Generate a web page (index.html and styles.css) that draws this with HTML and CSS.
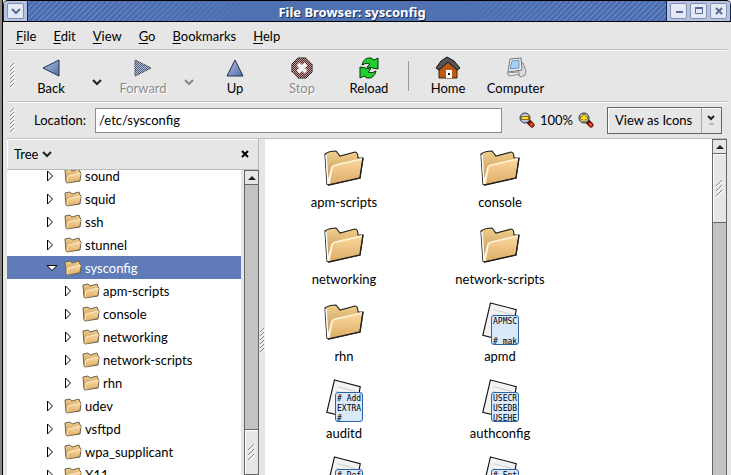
FILE: index.html
```
<!DOCTYPE html>
<html lang="en">
<head>
  <meta charset="UTF-8">
  <title>File Browser: sysconfig</title>
  <link rel="stylesheet" href="styles.css">
</head>
<body>
  <svg class="defs" width="0" height="0">
    <defs>
      <linearGradient id="tan" x1="0" y1="0" x2="0" y2="1">
        <stop offset="0" stop-color="#fdd9a0"/><stop offset="1" stop-color="#dcae68"/>
      </linearGradient>
      <linearGradient id="tan-back" x1="0" y1="0" x2="0" y2="1">
        <stop offset="0" stop-color="#f2cf8d"/><stop offset="1" stop-color="#b98a4c"/>
      </linearGradient>
      <linearGradient id="blue" x1="0" y1="0" x2="1" y2="1">
        <stop offset="0" stop-color="#b4c3e0"/><stop offset="1" stop-color="#4f6ea8"/>
      </linearGradient>
      <pattern id="dots" width="2" height="2" patternUnits="userSpaceOnUse">
        <path d="M0 0H1V1H0ZM1 1H2V2H1Z" fill="#e6e6e6" fill-opacity=".65"/>
      </pattern>
      <symbol id="folder" viewBox="0 0 40 36">
        <path d="M1 4Q5 1 12 1L16 6L31 2Q34 2 34 8L39 8L36 28L5 35L3 34Z" fill="url(#tan-back)" stroke="#222" stroke-width="1.2"/>
        <path d="M2 5L4 34L8 17" fill="none" stroke="#fff" stroke-width="1.5"/>
        <path d="M8 18Q9 15 12 14L38 8L35 27L5 34Z" fill="url(#tan)"/>
        <path d="M5 34L8 18Q9 15 12 15L38 9" fill="none" stroke="#fff3da" stroke-width="1.5"/>
        <path d="M39 8L36 28L4 35" fill="none" stroke="#222" stroke-width="1.2"/>
      </symbol>
      <symbol id="folder-small" viewBox="0 0 18 16">
        <path d="M1 2L6 1L8 3L15 1L16 4L17 5L16 13L3 15L2 14Z" fill="url(#tan-back)" stroke="#6c6250"/>
        <path d="M4 8L17 5L15 12L3 15Z" fill="url(#tan)"/>
        <path d="M3 14L4 8L16 5" fill="none" stroke="#fdebcb"/>
      </symbol>
      <symbol id="closed" viewBox="0 0 12 12">
        <path d="M1.500 1V11L6.500 6Z" fill="#fff" stroke="#000"/>
      </symbol>
      <symbol id="opened" viewBox="0 0 12 12">
        <path d="M1 3.500H11L6 8.500Z" fill="#fff" stroke="#000"/>
      </symbol>
      <symbol id="paper" viewBox="0 0 38 44">
        <path d="M9 1L36 8L30 42L1 35Z" fill="#f3f3f3" stroke="#111" stroke-width="1.2"/>
        <path d="M12 8L31 13M11 13L28 17M10 18L20 20" stroke="#ccc"/>
      </symbol>
      <symbol id="grip" viewBox="0 0 5 25">
        <path d="M1 5L5 1M1 9L5 5M1 13L5 9M1 17L5 13M1 21L5 17M1 25L5 21" stroke="#fff"/>
        <path d="M0 4L4 0M0 8L4 4M0 12L4 8M0 16L4 12M0 20L4 16M0 24L4 20" stroke="#888"/>
      </symbol>
      <symbol id="thumb-grip" viewBox="0 0 7 17">
        <path d="M1 7L7 1M1 12L7 6M1 17L7 11" stroke="#fff"/>
        <path d="M0 6L6 0M0 11L6 5M0 16L6 10" stroke="#888"/>
      </symbol>
      <symbol id="lens" viewBox="0 0 16 16">
        <path d="M10 10L13 13" stroke="#5b1608" stroke-width="5" stroke-linecap="round"/>
        <path d="M12 12L13 13" stroke="#ee4a1c" stroke-width="3" stroke-linecap="round"/>
        <circle cx="6" cy="6" r="5" fill="#b8c8dc" stroke="#333"/>
      </symbol>
    </defs>
  </svg>

  <div class="window">
    <header class="titlebar">
      <div class="title-buttons">
        <button class="win-btn" aria-label="Window menu"><svg width="10" height="8"><path d="M1 2L5 6L9 2" fill="none" stroke="#5a6a96" stroke-width="2"/></svg></button>
      </div>
      <h1>File Browser: sysconfig</h1>
      <div class="title-buttons">
        <button class="win-btn" aria-label="Minimize"><svg width="8" height="8"><path d="M1 5H8" stroke="#5a6a96" stroke-width="2"/></svg></button>
        <button class="win-btn" aria-label="Maximize"><svg width="8" height="8"><path d="M.5 1V6.500H7.500V1" fill="none" stroke="#5a6a96"/><path d="M0 1H8" stroke="#5a6a96" stroke-width="2"/></svg></button>
        <button class="win-btn" aria-label="Close"><svg width="8" height="8"><path d="M1 1L7 7M7 1L1 7" stroke="#5a6a96" stroke-width="2"/></svg></button>
      </div>
    </header>

    <nav class="menubar">
      <button><u>F</u>ile</button>
      <button><u>E</u>dit</button>
      <button><u>V</u>iew</button>
      <button><u>G</u>o</button>
      <button><u>B</u>ookmarks</button>
      <button><u>H</u>elp</button>
    </nav>

    <div class="toolbar">
      <svg class="grip"><use href="#grip"/></svg>
      <button class="tool"><svg width="24" height="24"><path d="M4 12L20 4V20Z" fill="url(#blue)" stroke="#222f55"/></svg>Back</button>
      <button class="drop" aria-label="Back history"><svg width="10" height="7"><path d="M1 1L5 5L9 1" fill="none" stroke="#222" stroke-width="2"/></svg></button>
      <button class="tool" disabled><svg width="24" height="24"><path d="M4 4L20 12L4 20Z" fill="#4c6291" stroke="#333"/><path d="M3 3L21 12L3 21Z" fill="url(#dots)"/></svg>Forward</button>
      <button class="drop" disabled aria-label="Forward history"><svg width="10" height="7"><path d="M1 1L5 5L9 1" fill="none" stroke="#888" stroke-width="2"/></svg></button>
      <button class="tool"><svg width="24" height="24"><path d="M12 4L20 20H4Z" fill="url(#blue)" stroke="#222f55"/></svg>Up</button>
      <button class="tool stop" disabled><svg width="24" height="24"><path d="M8 2H16L22 8V16L16 22H8L2 16V8Z" fill="#5c2224" stroke="#111"/><path d="M8 8L16 16M16 8L8 16" stroke="#fff" stroke-width="4"/><path d="M2 2H22V22H2Z" fill="url(#dots)"/></svg>Stop</button>
      <button class="tool"><svg width="24" height="24"><path id="arrow" d="M5 9Q7 1 14 2L17 4L21 2L21 13L10 11L13 8Q9 6 5 9Z" fill="#1fd02e" stroke="#042f06"/><use href="#arrow" transform="rotate(180 12 12)"/></svg>Reload</button>
      <span class="divider"></span>
      <button class="tool"><svg width="26" height="24"><path d="M4 11L13 4L22 11V22H4Z" fill="#bd5a17" stroke="#4a1f04"/><path d="M1 12L6 5L12 1L19 5L25 12L22 14L13 6L4 14Z" fill="#555" stroke="#111"/><rect x="11" y="14" width="6" height="8" fill="#fff"/><rect x="13" y="17" width="2" height="2" fill="#111"/></svg>Home</button>
      <button class="tool computer"><svg width="24" height="24"><path d="M16 6L19 7L22 15L21 19L17 21L14 19Z" fill="#ddd" stroke="#888"/><path d="M6 3L17 2L18 14L4 16Z" fill="#eee" stroke="#777"/><path d="M8 5L15 4L15 12L6 13Z" fill="#a8d0f4" stroke="#6a94c0"/><path d="M3 17L14 16L16 18L5 20Z" fill="#eee" stroke="#888"/></svg>Computer</button>
    </div>

    <div class="locationbar">
      <svg class="grip"><use href="#grip"/></svg>
      <label for="location">Location:</label>
      <input id="location" type="text" value="/etc/sysconfig">
      <div class="zoom">
        <button aria-label="Zoom out"><svg width="16" height="16"><use href="#lens"/><path d="M2 6H10" stroke="#9a6b00" stroke-width="4"/><path d="M3 6H9" stroke="#ffd83a" stroke-width="2"/></svg></button>
        <span>100%</span>
        <button aria-label="Zoom in"><svg width="16" height="16"><use href="#lens"/><path d="M2 6H10M6 2V10" stroke="#9a6b00" stroke-width="3"/><path d="M3 6H9M6 3V9" stroke="#ffe000" stroke-width="2"/></svg></button>
      </div>
      <div class="view-select">
        <select aria-label="View"><option>View as Icons</option><option>View as List</option></select>
        <svg width="8" height="10"><path d="M1 1L4 4L7 1" fill="none" stroke="#222" stroke-width="2"/><path d="M2 9H7" stroke="#bbb" stroke-width="2"/></svg>
      </div>
    </div>

    <main class="panes">
      <aside class="sidebar">
        <div class="side-head">
          <button>Tree<svg width="10" height="7"><path d="M1 1L5 5L9 1" fill="none" stroke="#222" stroke-width="2"/></svg></button>
          <button aria-label="Close side pane"><svg width="8" height="8"><path d="M1 1L7 7M7 1L1 7" stroke="#000" stroke-width="2"/></svg></button>
        </div>
        <div class="side-body">
          <ul class="tree" id="tree"></ul>
          <div class="scroll">
            <button aria-label="Scroll up"><svg width="8" height="6"><path d="M0 5L4 1L8 5Z" fill="#222"/></svg></button>
            <span class="track"></span>
            <span class="thumb tree-thumb"><svg><use href="#thumb-grip"/></svg></span>
          </div>
        </div>
      </aside>
      <div class="splitter"><svg class="grip"><use href="#grip"/></svg></div>
      <section class="files" id="files"></section>
      <div class="scroll">
        <button aria-label="Scroll up"><svg width="8" height="6"><path d="M0 5L4 1L8 5Z" fill="#222"/></svg></button>
        <span class="thumb files-thumb"><svg><use href="#thumb-grip"/></svg></span>
        <span class="track"></span>
      </div>
    </main>
  </div>

  <script src="script.js"></script>
</body>
</html>
```
FILE: styles.css
```
* {
  box-sizing: border-box;
}
body {
  margin: 0;
  background: #8b897d;
  color: #000;
  font: 13px/16px Lato, sans-serif;
}
button {
  font: inherit;
  color: inherit;
  background: none;
  border: 0;
  padding: 0;
}
svg {
  display: block;
}
.defs {
  position: absolute;
}
.window {
  display: flex;
  flex-direction: column;
  height: 100vh;
  margin-left: 2px;
  padding-left: 4px;
  background: #e6e6e6;
  border-left: 1px solid #000;
  overflow: hidden;
}
.titlebar {
  flex: none;
  display: flex;
  height: 22px;
  margin-left: -4px;
  border-top: 1px solid #000;
  border-bottom: 1px solid #000;
  border-radius: 5px 5px 0 0;
  background: repeating-linear-gradient(135deg, #4a6bb0 0 2px, #6f8fcb 3px, #4a6bb0 4px);
  overflow: hidden;
}
.titlebar h1 {
  flex: 1;
  margin: 0;
  padding-left: 10px;
  background: linear-gradient(90deg, transparent 10%, #4f70b1 40%, #4f70b1 65%, transparent 85%);
  color: #fff;
  font: bold 13px/22px "Noto Sans", sans-serif;
  text-align: center;
  text-shadow: 1px 1px #1c2f5a;
}
.title-buttons {
  display: flex;
  align-items: center;
  gap: 3px;
  padding: 0 3px;
  background: #b4c1df;
  border: 0 solid #18264c;
  border-width: 0 1px;
}
.win-btn {
  display: grid;
  place-items: center;
  width: 17px;
  height: 16px;
  background: #e4e9f4;
  border: 1px solid #8290b4;
  border-radius: 2px;
}
.menubar {
  flex: none;
  display: flex;
  gap: 17px;
  height: 27px;
  padding-left: 9px;
}
u {
  text-underline-offset: 2px;
}
.toolbar,
.locationbar {
  flex: none;
  display: flex;
  align-items: center;
  margin-right: 4px;
  border-top: 1px solid #bdbdbd;
  box-shadow: inset 0 1px #fff;
}
.toolbar {
  height: 52px;
}
.grip {
  flex: none;
  width: 5px;
  height: 25px;
}
.toolbar .grip,
.locationbar .grip {
  margin: 0 1px 0 3px;
}
.tool {
  display: flex;
  flex-direction: column;
  align-items: center;
  width: 70px;
}
.tool:disabled {
  color: #8c8c8c;
  text-shadow: 1px 1px #fff;
}
.drop {
  width: 22px;
  padding: 14px 6px 0;
}
.stop {
  width: 64px;
}
.divider {
  width: 1px;
  height: 30px;
  margin: 0 4px;
  background: #999;
}
.computer {
  width: 65px;
}
.locationbar {
  height: 37px;
}
.locationbar label {
  margin: 0 9px 0 18px;
}
#location {
  flex: 1;
  min-width: 0;
  height: 25px;
  padding: 0 3px;
  border: 1px solid #8c8c8c;
  background: #fff;
  font: inherit;
}
.zoom {
  display: flex;
  align-items: center;
  gap: 5px;
  margin: 0 13px 0 17px;
}
.view-select {
  display: flex;
  align-items: center;
  position: relative;
  width: 115px;
  height: 27px;
  margin-right: 5px;
  border: 1px solid #666;
  box-shadow: inset 1px 1px #fff;
}
.view-select select {
  appearance: none;
  flex: 1;
  height: 100%;
  padding: 0 7px;
  border: 0;
  background: none;
  font: inherit;
}
.view-select svg {
  position: absolute;
  right: 6px;
}
.view-select::after {
  content: "";
  position: absolute;
  right: 19px;
  height: 100%;
  border-left: 1px solid #aaa;
}
.panes {
  flex: 1;
  display: flex;
  min-height: 0;
  margin-right: 4px;
  border-top: 1px solid #bdbdbd;
}
.sidebar {
  flex: none;
  display: flex;
  flex-direction: column;
  width: 252px;
}
.side-head {
  flex: none;
  display: flex;
  justify-content: space-between;
  align-items: center;
  height: 31px;
  padding: 0 9px 0 7px;
  border: 1px solid #bbb;
  border-width: 0 1px 1px 0;
  box-shadow: inset 1px 1px #fff;
}
.side-head button {
  display: flex;
  align-items: center;
  gap: 4px;
}
.side-body {
  flex: 1;
  display: flex;
  gap: 3px;
  min-height: 0;
}
.tree {
  flex: 1;
  margin: 0;
  padding: 0;
  background: #fff;
  list-style: none;
  overflow: hidden;
}
.tree li {
  display: flex;
  align-items: center;
  height: 23px;
  padding-left: 39px;
}
.tree li:first-child {
  margin-top: -6px;
}
.tree li.child {
  padding-left: 57px;
}
.tree li.open {
  background: #5f7cb8;
  color: #fff;
}
.tree .arrow {
  width: 12px;
  height: 12px;
  margin-right: 6px;
}
.tree .icon {
  width: 18px;
  height: 16px;
  margin-right: 3px;
}
.scroll {
  flex: none;
  display: flex;
  flex-direction: column;
  width: 15px;
  background: #c3c3c3;
  border: 1px solid #666;
  border-bottom: 0;
}
.scroll button {
  display: grid;
  place-items: center;
  height: 14px;
  background: #e6e6e6;
  border-bottom: 1px solid #666;
}
.track {
  flex: 1;
}
.thumb {
  display: grid;
  place-items: center;
  background: #e6e6e6;
  border: 1px solid #666;
  border-width: 1px 0;
  box-shadow: inset 1px 1px #fff;
}
.thumb svg {
  width: 7px;
  height: 17px;
}
.tree-thumb {
  height: 46px;
}
.files-thumb {
  height: 69px;
  border-top: 0;
}
.splitter {
  display: flex;
  align-items: center;
  width: 6px;
  padding: 66px 0 0 1px;
}
.files {
  flex: 1;
  display: grid;
  grid-template-columns: 156px 156px;
  grid-auto-rows: 77px;
  padding-left: 1px;
  background: #fff;
  overflow: hidden;
}
.file {
  display: flex;
  flex-direction: column;
  align-items: center;
  justify-content: space-between;
  height: 71px;
}
.file .icon {
  width: 40px;
  height: 36px;
  margin-top: 11px;
}
.doc {
  position: relative;
  width: 38px;
  height: 42px;
  margin-top: 9px;
}
.doc svg {
  width: 38px;
  height: 42px;
}
/* preview of the first lines of the file, over the page icon */
.doc pre {
  position: absolute;
  left: 10px;
  top: 13px;
  width: 28px;
  height: 30px;
  margin: 0;
  padding: 1px 0 0 1px;
  border: 1px solid #2c62a8;
  border-radius: 3px;
  background: #d9e8fb;
  font: 8px/10px "DejaVu Sans Mono", monospace;
  overflow: hidden;
}
```
FILE: script.js
```
const tree = [
  ["sound"], ["squid"], ["ssh"], ["stunnel"], ["sysconfig", "open"],
  ["apm-scripts", "child"], ["console", "child"], ["networking", "child"],
  ["network-scripts", "child"], ["rhn", "child"],
  ["udev"], ["vsftpd"], ["wpa_supplicant"], ["X11"]
];

const files = [
  { name: "apm-scripts" }, { name: "console" },
  { name: "networking" }, { name: "network-scripts" },
  { name: "rhn" }, { name: "apmd", text: "APMSC\n\n# mak" },
  { name: "auditd", text: "# Add\nEXTRA\n#" }, { name: "authconfig", text: "USECR\nUSEDB\nUSEHE" },
  { name: "", text: "# Def" }, { name: "", text: "# Ent" }
];

document.getElementById("tree").innerHTML = tree.map(([name, cls = ""]) => `
  <li class="${cls}">
    <svg class="arrow"><use href="#${cls === "open" ? "opened" : "closed"}"/></svg>
    <svg class="icon"><use href="#folder-small"/></svg>${name}
  </li>`).join("");

document.getElementById("files").innerHTML = files.map(({ name, text }) => {
  const icon = text
    ? `<div class="doc"><svg><use href="#paper"/></svg><pre>${text}</pre></div>`
    : `<svg class="icon"><use href="#folder"/></svg>`;
  return `<div class="file">${icon}<span>${name}</span></div>`;
}).join("");
```
